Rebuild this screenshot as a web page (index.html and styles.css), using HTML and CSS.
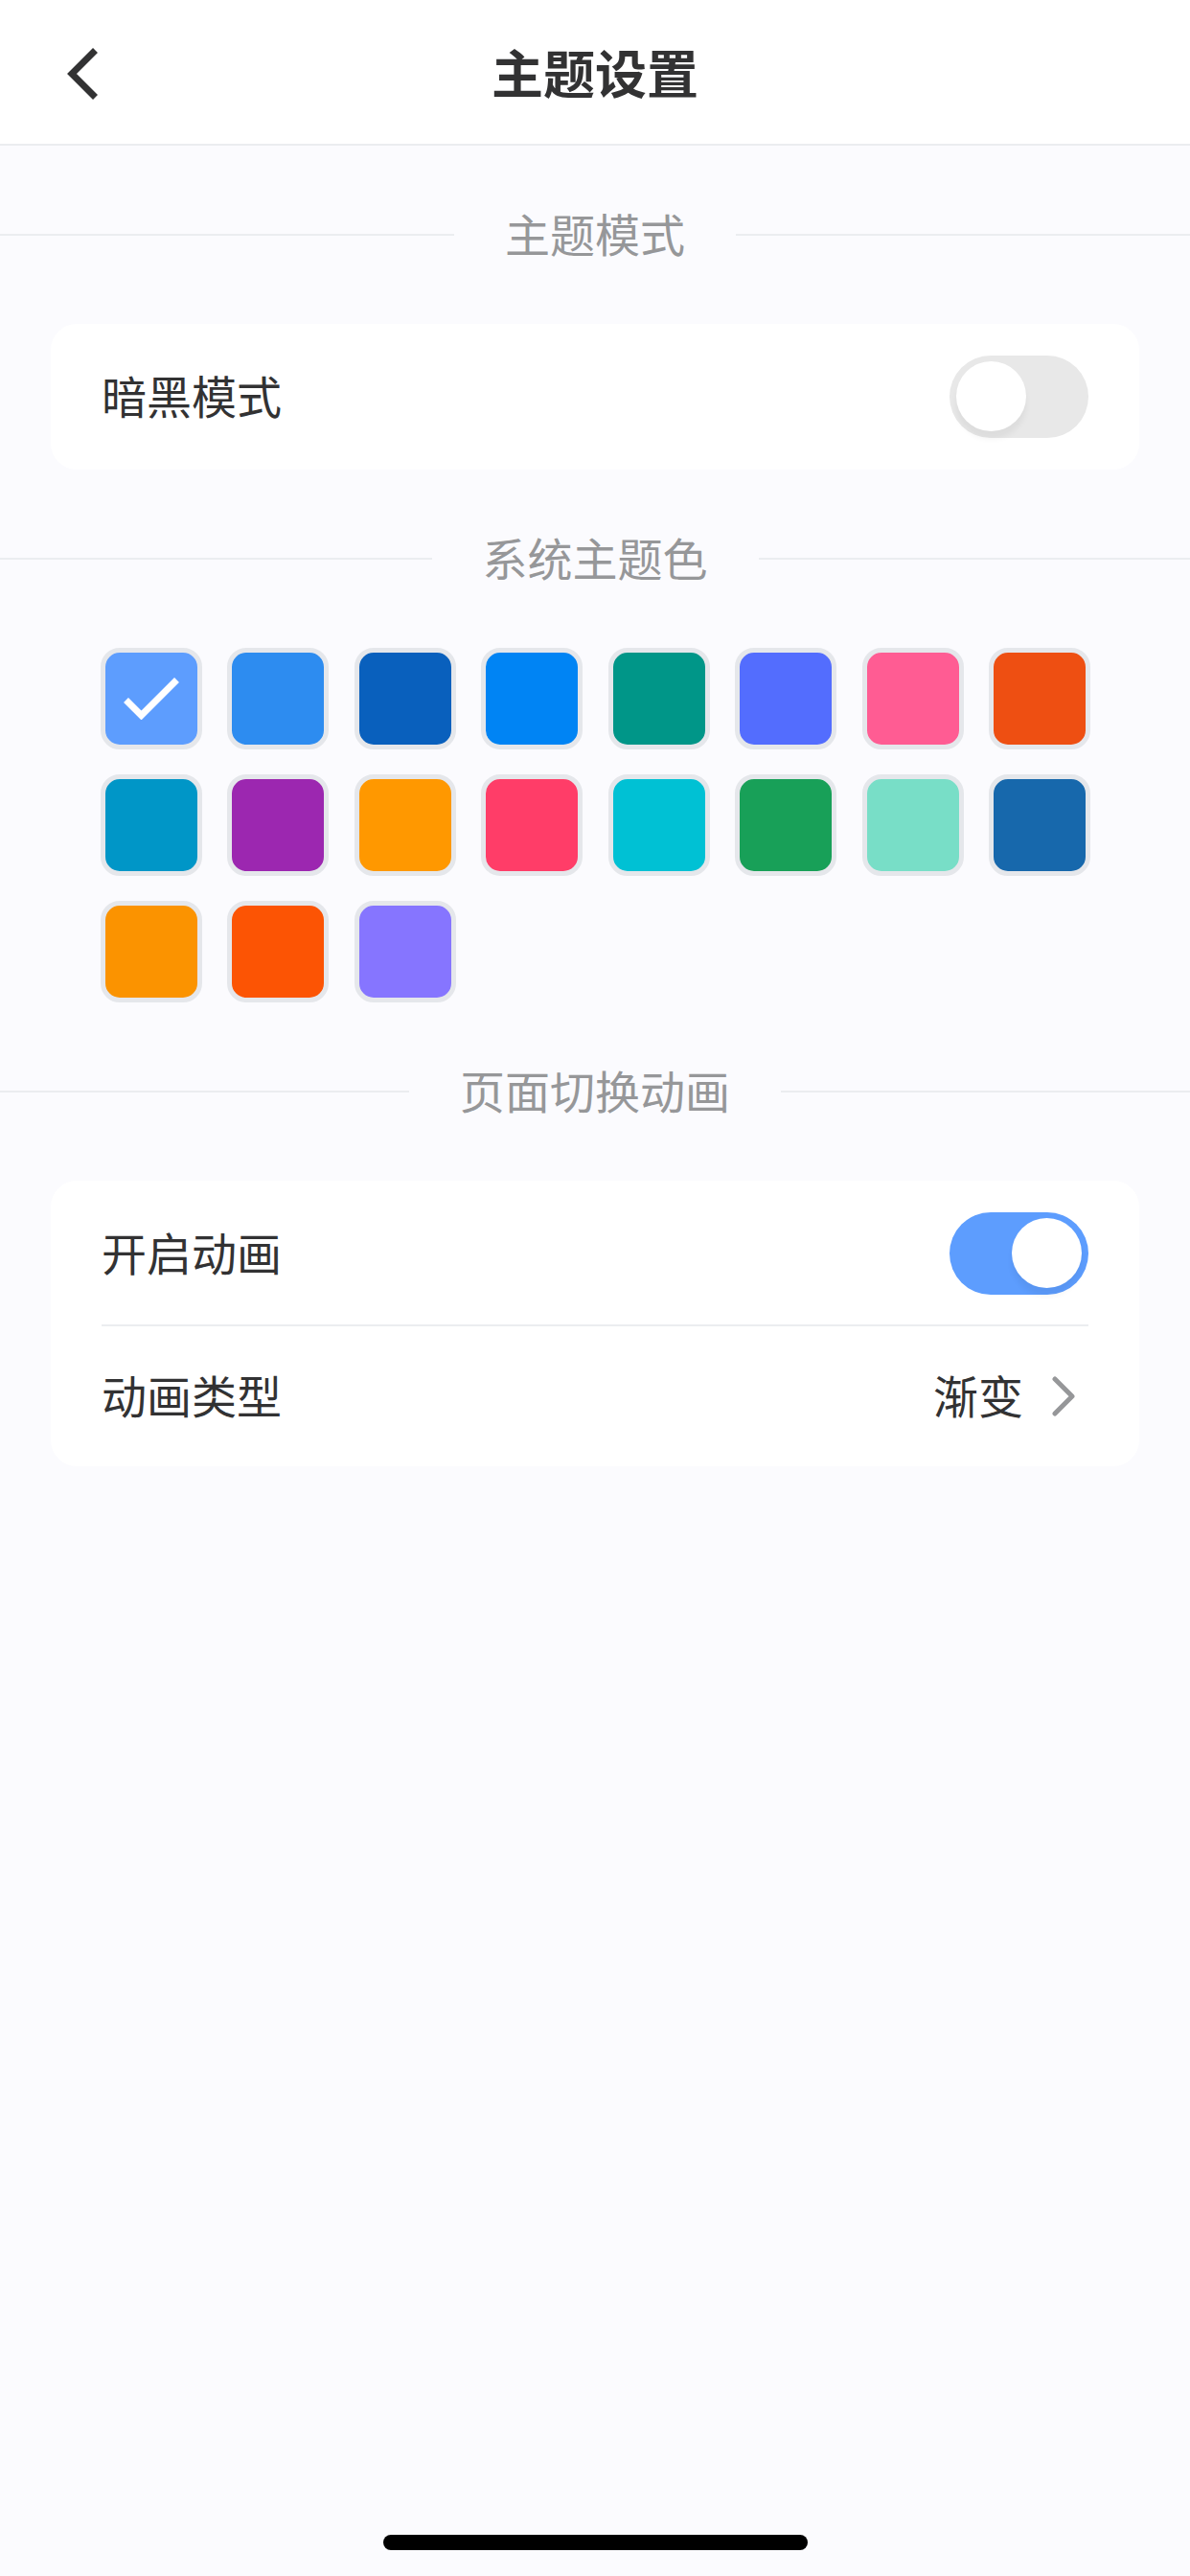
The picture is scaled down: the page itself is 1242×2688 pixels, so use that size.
FILE: index.html
```html
<!DOCTYPE html>
<html lang="zh-CN">
<head>
    <meta charset="utf-8">
    <meta name="viewport" content="width=device-width, initial-scale=1">
    <title>主题设置</title>
    <link rel="stylesheet" href="styles.css">
</head>
<body>
  <header class="header">
    <button type="button" class="back" aria-label="返回">
      <svg class="back-icon" viewBox="0 0 32 56"><path d="M29.5 3.5 L5 28 L29.5 52.5"/></svg>
    </button>
    <h1 class="title">主题设置</h1>
  </header>

  <main class="content">
    <h2 class="divider">主题模式</h2>
    <div class="card">
      <div class="row">
        <label for="dark">暗黑模式</label>
        <input type="checkbox" class="switch" id="dark">
      </div>
    </div>

    <h2 class="divider">系统主题色</h2>
    <div class="colors">
      <button type="button" class="swatch c1" aria-label="#5D9DFE" aria-pressed="true">
        <svg class="check-icon" viewBox="0 0 58 44"><path d="M2.5 23.5 L18.5 39.5 L55.5 2.5"/></svg>
      </button>
      <button type="button" class="swatch c2" aria-label="#2D8CF0"></button>
      <button type="button" class="swatch c3" aria-label="#0960BD"></button>
      <button type="button" class="swatch c4" aria-label="#0084F4"></button>
      <button type="button" class="swatch c5" aria-label="#009688"></button>
      <button type="button" class="swatch c6" aria-label="#536DFE"></button>
      <button type="button" class="swatch c7" aria-label="#FF5C93"></button>
      <button type="button" class="swatch c8" aria-label="#EE4F12"></button>
      <button type="button" class="swatch c9" aria-label="#0096C7"></button>
      <button type="button" class="swatch c10" aria-label="#9C27B0"></button>
      <button type="button" class="swatch c11" aria-label="#FF9800"></button>
      <button type="button" class="swatch c12" aria-label="#FF3D68"></button>
      <button type="button" class="swatch c13" aria-label="#00C1D4"></button>
      <button type="button" class="swatch c14" aria-label="#18A058"></button>
      <button type="button" class="swatch c15" aria-label="#78DEC7"></button>
      <button type="button" class="swatch c16" aria-label="#1768AC"></button>
      <button type="button" class="swatch c17" aria-label="#FB9300"></button>
      <button type="button" class="swatch c18" aria-label="#FC5404"></button>
      <button type="button" class="swatch c19" aria-label="#8675FF"></button>
    </div>

    <h2 class="divider">页面切换动画</h2>
    <div class="card">
      <div class="row">
        <label for="animate">开启动画</label>
        <input type="checkbox" class="switch" id="animate" checked>
      </div>
      <button type="button" class="row row-link">
        <span>动画类型</span>
        <span class="value">渐变
          <svg class="arrow-icon" viewBox="0 0 24 42"><path d="M3 3 L21 21 L3 39"/></svg>
        </span>
      </button>
    </div>
  </main>

  <div class="home-bar"></div>
</body>
</html>
```

FILE: styles.css
```css
* {
  box-sizing: border-box;
}
body {
  margin: 0;
  min-height: 100vh;
  display: flex;
  flex-direction: column;
  background-color: #fbfbfe;
  color: #323233;
  font-family: "Noto Sans", "Noto Sans CJK SC", sans-serif;
  font-size: 47px;
  line-height: 64px;
}
button {
  padding: 0;
  border: none;
  background: none;
  color: inherit;
  font: inherit;
  cursor: pointer;
}
svg {
  display: block;
  fill: none;
}

/* top bar */
.header {
  display: grid;
  grid-template-columns: 160px 1fr 160px;
  align-items: center;
  height: 152px;
  padding-top: 3px;
  background-color: white;
  border-bottom: 2px solid #ebedf0;
}
.back {
  display: flex;
  padding: 40px 0 40px 70px;
}
.back-icon {
  width: 32px;
  height: 56px;
  stroke: #323233;
  stroke-width: 7;
}
.title {
  margin: 0;
  text-align: center;
  font-size: 54px;
  font-weight: bold;
}

.content {
  flex: 1;
}

/* section heading with a line on both sides */
.divider {
  display: flex;
  align-items: center;
  gap: 53px;
  margin: 0;
  padding: 61px 0;
  color: #969799;
  font-size: 47px;
  font-weight: normal;
}
.divider::before,
.divider::after {
  content: "";
  flex: 1;
  height: 2px;
  background-color: #ebedf0;
}

.card {
  margin: 0 53px;
  padding: 0 53px;
  background-color: white;
  border-radius: 27px;
}
.row {
  display: flex;
  justify-content: space-between;
  align-items: center;
  width: 100%;
  min-height: 152px;
}
/* the line sits on the bottom edge of the row above */
.row-link {
  min-height: 148px;
  margin-top: -2px;
  border-top: 2px solid #ebedf0;
}
.value {
  display: flex;
  align-items: center;
  gap: 30px;
  padding-right: 14px;
}
.arrow-icon {
  width: 24px;
  height: 42px;
  stroke: #969799;
  stroke-width: 5;
  stroke-linecap: round;
  stroke-linejoin: round;
}

.switch {
  appearance: none;
  width: 145px;
  height: 86px;
  margin: 0;
  padding: 6px 7px;
  border-radius: 43px;
  background-color: #e8e8e8;
  cursor: pointer;
}
.switch::before {
  content: "";
  display: block;
  width: 73px;
  height: 73px;
  border-radius: 50%;
  background-color: white;
  box-shadow: 0 8px 6px rgba(0, 0, 0, 0.05);
}
.switch:checked {
  background-color: #5d9dfe;
}
.switch:checked::before {
  margin-left: auto;
}

/* theme colours */
.colors {
  display: grid;
  grid-template-columns: repeat(8, 106px);
  justify-content: space-between;
  row-gap: 26px;
  padding: 0 104px 0 105px;
}
.swatch {
  display: flex;
  justify-content: center;
  align-items: center;
  height: 106px;
  border: 5px solid #e5e7eb;
  border-radius: 20px;
}
.check-icon {
  width: 58px;
  height: 44px;
  stroke: white;
  stroke-width: 7;
}
.c1 { background-color: #5d9dfe; }
.c2 { background-color: #2d8cf0; }
.c3 { background-color: #0960bd; }
.c4 { background-color: #0084f4; }
.c5 { background-color: #009688; }
.c6 { background-color: #536dfe; }
.c7 { background-color: #ff5c93; }
.c8 { background-color: #ee4f12; }
.c9 { background-color: #0096c7; }
.c10 { background-color: #9c27b0; }
.c11 { background-color: #ff9800; }
.c12 { background-color: #ff3d68; }
.c13 { background-color: #00c1d4; }
.c14 { background-color: #18a058; }
.c15 { background-color: #78dec7; }
.c16 { background-color: #1768ac; }
.c17 { background-color: #fb9300; }
.c18 { background-color: #fc5404; }
.c19 { background-color: #8675ff; }

.home-bar {
  align-self: center;
  width: 443px;
  height: 16px;
  margin-bottom: 27px;
  border-radius: 8px;
  background-color: black;
}
```
